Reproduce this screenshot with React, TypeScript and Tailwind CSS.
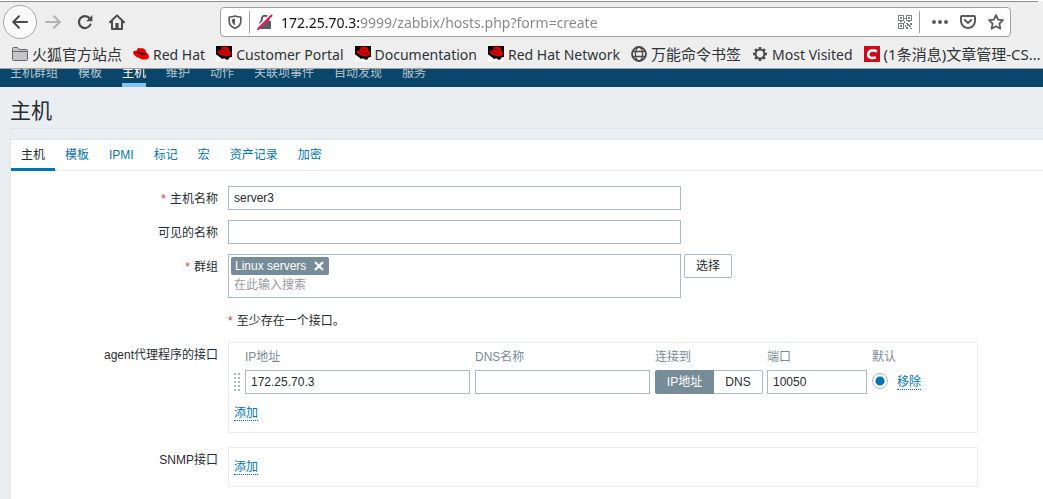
import React from "react";

const chromeFont = "font-['Noto_Sans','Noto_Sans_CJK_SC',sans-serif]";
const pageFont = "font-['Liberation_Sans','Noto_Sans_CJK_SC',sans-serif]";

function BackIcon() {
  return (
    <svg width="16" height="16" viewBox="0 0 16 16" fill="none" stroke="currentColor" strokeWidth="2" strokeLinecap="round" strokeLinejoin="round">
      <path d="M15 8H1.5M7 2.2L1.2 8L7 13.8" />
    </svg>
  );
}

function ForwardIcon() {
  return (
    <svg width="16" height="16" viewBox="0 0 16 16" fill="none" stroke="currentColor" strokeWidth="2" strokeLinecap="round" strokeLinejoin="round">
      <path d="M1 8H14.5M9 2.2L14.8 8L9 13.8" />
    </svg>
  );
}

function ReloadIcon() {
  return (
    <svg width="16" height="16" viewBox="0 0 16 16" fill="none" stroke="currentColor" strokeWidth="2.2">
      <path d="M12.6 4.2A6 6 0 1 0 13.4 10.6" strokeLinecap="round" />
      <path d="M15.4 1V7.2H9.2Z" fill="currentColor" stroke="none" />
    </svg>
  );
}

function HomeIcon() {
  return (
    <svg width="16" height="16" viewBox="0 0 16 16" fill="none" stroke="currentColor" strokeWidth="2" strokeLinejoin="round" strokeLinecap="round">
      <path d="M1 8.2L8 1.4L15 8.2" />
      <path d="M3 7.5V15H13V7.5" />
      <path d="M6.4 15V9H9.6V15" fill="currentColor" stroke="none" />
    </svg>
  );
}

function ShieldIcon() {
  return (
    <svg width="14" height="14" viewBox="0 0 14 14" fill="none">
      <path d="M7 1C9 1.7 11 2 12.8 2V6C12.8 9.6 10.4 12 7 13.2C3.6 12 1.2 9.6 1.2 6V2C3 2 5 1.7 7 1Z" stroke="#5b5b5d" strokeWidth="1.7" strokeLinejoin="round" />
      <path d="M7 3.6V10.4C5 9.4 3.8 7.8 3.8 5.6V4.2C5 4.2 6 4 7 3.6Z" fill="#5b5b5d" />
    </svg>
  );
}

function InsecureIcon() {
  return (
    <svg width="16" height="16" viewBox="0 0 16 16" fill="none">
      <path d="M4.7 8V5A3.3 3.3 0 0 1 11.3 5V8" stroke="#5b5b5d" strokeWidth="2" />
      <rect x="2.5" y="7" width="11.5" height="8" rx="1" fill="#5b5b5d" />
      <path d="M0.5 14L13.5 1" stroke="#fff" strokeWidth="3" />
      <path d="M1 15L14.5 1.5" stroke="#ff0f4f" strokeWidth="2" strokeLinecap="round" />
    </svg>
  );
}

function QrIcon() {
  return (
    <svg width="14" height="14" viewBox="0 0 14 14" fill="#7b7f86" shapeRendering="crispEdges">
      <path fillRule="evenodd" d="M0 0H6V6H0ZM1 1V5H5V1ZM8 0H14V6H8ZM9 1V5H13V1ZM0 8H6V14H0ZM1 9V13H5V9Z" />
      <path d="M2 2H4V4H2ZM10 2H12V4H10ZM2 10H4V12H2ZM6 3H8V4H6ZM6 6H7V8H6ZM2 6H4V7H2ZM10 6H12V7H10ZM8 8H10V9H8ZM12 8H14V10H12ZM9 9H11V11H9ZM7 10H8V12H7ZM11 11H13V12H11ZM8 12H10V14H8ZM12 13H14V14H12ZM11 10H12V11H11Z" />
    </svg>
  );
}

function PocketIcon() {
  return (
    <svg width="16" height="14" viewBox="0 0 16 14" fill="none" stroke="#5b5b5d" strokeWidth="2" strokeLinecap="round" strokeLinejoin="round">
      <path d="M2 1H14A1 1 0 0 1 15 2V6A7 7 0 0 1 1 6V2A1 1 0 0 1 2 1Z" />
      <path d="M4.8 5L8 8L11.2 5" />
    </svg>
  );
}

function StarIcon() {
  return (
    <svg width="16" height="16" viewBox="0 0 16 16" fill="none" stroke="#5b5b5d" strokeWidth="1.8" strokeLinejoin="round">
      <path d="M8 1L10.1 5.6L15 6.2L11.4 9.6L12.4 14.7L8 12.2L3.6 14.7L4.6 9.6L1 6.2L5.9 5.6Z" />
    </svg>
  );
}

function FolderIcon() {
  return (
    <svg width="16" height="16" viewBox="0 0 16 16">
      <path d="M0.5 2.5A1 1 0 0 1 1.5 1.5H5.5L7 3.5H14.5A1 1 0 0 1 15.5 4.5V13.5A1 1 0 0 1 14.5 14.5H1.5A1 1 0 0 1 0.5 13.5Z" fill="#c6c6c8" stroke="#66666a" />
      <path d="M1 5.5H15" stroke="#66666a" />
    </svg>
  );
}

function HatIcon() {
  return (
    <svg width="16" height="16" viewBox="0 0 16 16">
      <path d="M0.2 6.2C0.6 4.8 2.2 4.5 3.6 4.8L4.4 3C4.8 1.9 5.8 1.8 6.8 2.2C8 2.6 8.4 2 9.6 2.2C11.8 2.6 12.6 4 13.2 6.6C15 7.6 16.4 9.6 15.8 11.4C15 14 10.4 14.2 6.8 12.4C3 10.8 0 8.6 0.2 6.2Z" fill="#e80000" />
      <path d="M3.6 5.2C4.4 7.6 9.6 9.6 13 8.2L13.2 6.8C10 7.8 5.8 6.4 4 4.2Z" fill="#230000" />
    </svg>
  );
}

function ShadowmanIcon() {
  return (
    <svg width="16" height="16" viewBox="0 0 16 16">
      <rect width="16" height="16" fill="#000" />
      <path d="M0 8.4C1.6 8.6 2.4 10.4 4 11.2L6 13L8.4 12.2L10 13.8L12.6 13.6L13.4 11.6L16 11V16H0Z" fill="#fff" />
      <path d="M1.4 5.2C2.2 4 3.6 4.6 4.6 4.8L5.4 1.6C6.4 0.2 8 1.4 9.4 0.6C11.4 0 12.8 1.6 13.4 4.4C15 5.6 15.6 7.4 14.6 9C13.2 11 9.6 10.8 6.4 9.6C3.4 8.4 1.2 7 1.4 5.2Z" fill="#d80000" />
      <path d="M4.4 5C6 7.4 10 8.2 13 7.4M6.5 3L9.5 4.4" stroke="#4b0000" fill="none" strokeWidth="0.8" />
    </svg>
  );
}

function GlobeIcon() {
  return (
    <svg width="16" height="16" viewBox="0 0 16 16" fill="none" stroke="#4a4a4c">
      <circle cx="8" cy="8" r="7" strokeWidth="1.8" />
      <ellipse cx="8" cy="8" rx="3.6" ry="7" strokeWidth="1.3" />
      <path d="M1.6 5.5H14.4M1.6 10.5H14.4" strokeWidth="1.3" />
    </svg>
  );
}

function GearIcon() {
  return (
    <svg width="16" height="16" viewBox="0 0 16 16" fill="none" stroke="#4a4a4c">
      <circle cx="8" cy="8" r="4.4" strokeWidth="2" />
      <path d="M8 1V3.4M8 12.6V15M1 8H3.4M12.6 8H15M3.1 3.1L4.7 4.7M11.3 11.3L12.9 12.9M3.1 12.9L4.7 11.3M11.3 4.7L12.9 3.1" strokeWidth="2.6" />
    </svg>
  );
}

function BlogIcon() {
  return (
    <svg width="16" height="16" viewBox="0 0 16 16">
      <rect width="16" height="16" fill="#cc0a1c" />
      <path d="M13 5.2C9.6 4 5 3.8 4.2 8.2C3.6 12.2 8.4 12.4 11.8 11.6" fill="none" stroke="#fff" strokeWidth="2.6" />
    </svg>
  );
}

const bookmarks = [
  { label: "火狐官方站点", icon: <FolderIcon />, cjk: true },
  { label: "Red Hat", icon: <HatIcon /> },
  { label: "Customer Portal", icon: <ShadowmanIcon /> },
  { label: "Documentation", icon: <ShadowmanIcon /> },
  { label: "Red Hat Network", icon: <ShadowmanIcon /> },
  { label: "万能命令书签", icon: <GlobeIcon />, cjk: true },
  { label: "Most Visited", icon: <GearIcon /> },
  { label: "(1条消息)文章管理-CS…", icon: <BlogIcon />, cjk: true },
];

function BrowserChrome() {
  return (
    <header className={`border-b border-[#a0a0a0] bg-[#eeeeee] text-sm text-[#2e3436] ${chromeFont}`}>
      <div className="mt-px mr-[5px] h-px bg-[#8e8e8e]" />
      <div className="flex h-[40px] items-center pr-8 pl-[3px] text-[#4a4a4c]">
        <button aria-label="后退" className="flex size-[34px] items-center justify-center rounded-full border border-[#a8a8a8] bg-[#fbfbfb]">
          <BackIcon />
        </button>
        <button aria-label="前进" className="ml-2 text-[#b2b2b2]">
          <ForwardIcon />
        </button>
        <button aria-label="刷新" className="ml-4">
          <ReloadIcon />
        </button>
        <button aria-label="主页" className="ml-4">
          <HomeIcon />
        </button>
        <div className="ml-[95px] flex h-[30px] flex-1 items-center rounded border border-[#a0a0a0] bg-white pr-1.5 pl-[7px]">
          <ShieldIcon />
          <span className="mx-[7px] h-[22px] w-px bg-[#a0a0a0]" />
          <InsecureIcon />
          <input
            aria-label="地址"
            defaultValue="172.25.70.3:9999/zabbix/hosts.php?form=create"
            className="ml-2 h-6 min-w-0 flex-1 bg-[linear-gradient(to_right,#111_79px,#858585_79px)] bg-clip-text text-sm text-transparent outline-none"
          />
          <button aria-label="二维码">
            <QrIcon />
          </button>
          <span className="mr-3 ml-[7px] h-[22px] w-px bg-[#a0a0a0]" />
          <button aria-label="更多">
            <svg width="16" height="4" viewBox="0 0 16 4" fill="#5b5b5d">
              <circle cx="2" cy="2" r="2" />
              <circle cx="8" cy="2" r="2" />
              <circle cx="14" cy="2" r="2" />
            </svg>
          </button>
          <button aria-label="保存到 Pocket" className="ml-3">
            <PocketIcon />
          </button>
          <button aria-label="收藏" className="ml-3">
            <StarIcon />
          </button>
        </div>
      </div>
      <nav className="flex h-[26px] items-center gap-[11px] overflow-hidden pb-0.5 pl-3 whitespace-nowrap">
        {bookmarks.map((b) => (
          <a key={b.label} href="#" className="flex shrink-0 items-center gap-1">
            {b.icon}
            <span className={b.cjk ? "text-[15px] leading-5" : "pt-0.5 text-sm leading-5"}>{b.label}</span>
          </a>
        ))}
      </nav>
    </header>
  );
}

const navItems = ["主机群组", "模板", "主机", "维护", "动作", "关联项事件", "自动发现", "服务"];
const tabs = ["主机", "模板", "IPMI", "标记", "宏", "资产记录", "加密"];

function TopNav() {
  return (
    <nav className="flex h-[18px] items-end gap-5 overflow-hidden bg-[#0a466a] pl-2.5 text-[#b4c8d3]">
      {navItems.map((item, i) => (
        <a
          key={item}
          href="#"
          className={
            i === 2
              ? "border-b-4 border-[#80c6f5] pb-0.5 leading-4 text-white"
              : "border-b-4 border-transparent pb-0.5 leading-4"
          }
        >
          {item}
        </a>
      ))}
    </nav>
  );
}

const inputClass = "h-6 border border-[#acbbc2] bg-white px-[5px] text-xs outline-none";
const linkClass = "border-b border-dotted border-[#0275b8] leading-4 text-[#0275b8]";

function Star() {
  return <span className="mr-1 text-[#e33734]">*</span>;
}

function Row({ label, id, required, children }: { label?: string; id?: string; required?: boolean; children: React.ReactNode }) {
  return (
    <div className="grid grid-cols-[207px_1fr] gap-x-2.5">
      <label htmlFor={id} className="pt-0.5 text-right leading-[22px]">
        {required && <Star />}
        {label}
      </label>
      {children}
    </div>
  );
}

function Interfaces() {
  return (
    <div className="max-w-[750px] border border-[#e9ecee] px-[5px] pb-2.5">
      <table className="table-fixed border-collapse">
        <colgroup>
          <col className="w-[11px]" />
          <col className="w-[230px]" />
          <col className="w-[180px]" />
          <col className="w-[112px]" />
          <col className="w-[105px]" />
          <col className="w-[25px]" />
          <col className="w-[40px]" />
        </colgroup>
        <thead>
          <tr className="h-[27px] text-left whitespace-nowrap text-[#768d99]">
            <th />
            <th className="p-0 font-normal">IP地址</th>
            <th className="p-0 font-normal">DNS名称</th>
            <th className="p-0 font-normal">连接到</th>
            <th className="p-0 font-normal">端口</th>
            <th className="p-0 font-normal">默认</th>
            <th />
          </tr>
        </thead>
        <tbody>
          <tr className="h-6">
            <td className="p-0">
              <svg width="6" height="18" viewBox="0 0 6 18" fill="#acbbc2" className="block" shapeRendering="crispEdges">
                {[0, 4, 8, 12, 16].map((y) => (
                  <g key={y}>
                    <rect x="0" y={y} width="2" height="2" />
                    <rect x="4" y={y} width="2" height="2" />
                  </g>
                ))}
              </svg>
            </td>
            <td className="p-0">
              <input aria-label="IP地址" defaultValue="172.25.70.3" className={`block w-[225px] ${inputClass}`} />
            </td>
            <td className="p-0">
              <input aria-label="DNS名称" className={`block w-[175px] ${inputClass}`} />
            </td>
            <td className="p-0">
              <div className="flex h-6 w-[108px]">
                <button type="button" className="w-[59px] rounded-l-xs bg-[#768d99] text-white">IP地址</button>
                <button type="button" className="flex-1 rounded-r-xs border border-l-0 border-[#acbbc2]">DNS</button>
              </div>
            </td>
            <td className="p-0">
              <input aria-label="端口" defaultValue="10050" className={`block w-[100px] ${inputClass}`} />
            </td>
            <td className="p-0">
              <input
                type="radio"
                aria-label="默认"
                defaultChecked
                className="mb-0.5 block size-4 appearance-none rounded-full border border-[#acbbc2] bg-white checked:bg-[radial-gradient(circle,#0275b8_4px,transparent_5px)]"
              />
            </td>
            <td className="p-0">
              <a href="#" className={linkClass}>移除</a>
            </td>
          </tr>
        </tbody>
      </table>
      <div className="pt-2.5 leading-[18px]">
        <a href="#" className={linkClass}>添加</a>
      </div>
    </div>
  );
}

export default function App() {
  return (
    <div className={`min-h-screen bg-[#ebeef0] text-xs text-[#1f2c33] ${pageFont}`}>
      <BrowserChrome />
      <TopNav />
      <main className="pl-2.5">
        <h1 className="border-b border-[#dfe4e7] pt-2 pb-px text-[21px] leading-8">主机</h1>
        <div className="mt-2.5 border-t border-l border-[#dfe4e7] bg-white pb-5">
          <div className="flex h-[31px] border-b border-[#ebeef0]">
            {tabs.map((t, i) => (
              <a
                key={t}
                href="#"
                className={
                  i === 0
                    ? "h-[31px] border-b-3 border-[#0275b8] px-2.5 leading-[30px]"
                    : "px-2.5 leading-[30px] text-[#0275b8]"
                }
              >
                {t}
              </a>
            ))}
          </div>
          <form className="flex flex-col pt-[15px]">
            <div className="flex flex-col gap-2.5">
              <Row label="主机名称" id="host" required>
                <input id="host" defaultValue="server3" className={`w-full max-w-[453px] ${inputClass}`} />
              </Row>
              <Row label="可见的名称" id="visible">
                <input id="visible" className={`w-full max-w-[453px] ${inputClass}`} />
              </Row>
              <Row label="群组" id="groups" required>
                <div className="flex items-start gap-[3px]">
                  <div className="flex h-11 w-full max-w-[453px] flex-col items-start gap-px border border-[#acbbc2] p-0.5">
                    <span className="flex h-[18px] items-center gap-2 rounded-xs bg-[#768d99] pr-[5px] pl-1 text-white">
                      Linux servers
                      <button type="button" aria-label="移除 Linux servers">
                        <svg width="10" height="10" viewBox="0 0 10 10" stroke="#fff" strokeWidth="2.2" className="block">
                          <path d="M1 1L9 9M9 1L1 9" />
                        </svg>
                      </button>
                    </span>
                    <input id="groups" placeholder="在此输入搜索" className="h-5 w-full px-[3px] outline-none placeholder:text-[#9a9a9a]" />
                  </div>
                  <button type="button" className="h-6 w-12 shrink-0 rounded-xs border border-[#acbbc2]">选择</button>
                </div>
              </Row>
              <Row>
                <p className="pt-0.5 leading-[22px]">
                  <Star />
                  至少存在一个接口。
                </p>
              </Row>
            </div>
            <div className="mt-2.5 flex flex-col gap-3.5">
              <Row label="agent代理程序的接口">
                <Interfaces />
              </Row>
              <Row label="SNMP接口">
                <div className="max-w-[750px] border border-[#e9ecee] px-[5px] pt-2.5 pb-2.5 leading-[18px]">
                  <a href="#" className={linkClass}>添加</a>
                </div>
              </Row>
            </div>
          </form>
        </div>
      </main>
    </div>
  );
}
